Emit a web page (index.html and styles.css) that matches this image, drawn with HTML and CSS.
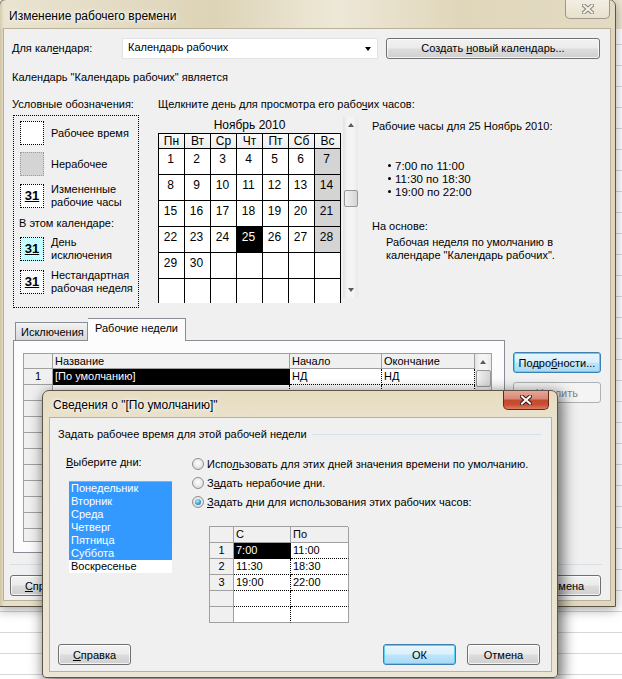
FILE: index.html
```html
<!DOCTYPE html>
<html lang="ru">
<head>
    <meta charset="UTF-8">
    <title>Изменение рабочего времени</title>
    <link rel="stylesheet" href="styles.css">
</head>
<body>

<div class="desktop">
    <div class="app-caption"></div>

    <!-- Main dialog -->
    <div class="window main-window">
        <div class="titlebar">
            <span class="title">Изменение рабочего времени</span>
            <span class="close-btn close-inactive">
                <svg width="12" height="10" viewBox="0 0 12 10"><path class="x-outline" d="M2 1.5 L10 8.5 M10 1.5 L2 8.5"/><path class="x-fill" d="M2 1.5 L10 8.5 M10 1.5 L2 8.5"/></svg>
            </span>
        </div>
        <div class="client main-client">
            <div class="calendar-row">
                <span class="cal-label">Для кал<u>е</u>ндаря:</span>
                <div class="combo">
                    <span>Календарь рабочих</span>
                    <span class="combo-arrow"></span>
                </div>
                <button class="btn new-cal-btn">Создать <u>н</u>овый календарь...</button>
            </div>
            <div class="cal-note">Календарь "Календарь рабочих" является</div>

            <div class="cal-body">
                <div class="legend-col">
                    <div class="col-head">Условные обозначения:</div>
                    <div class="legend-box">
                        <div class="legend-item">
                            <span class="swatch sw-work"></span>
                            <span>Рабочее время</span>
                        </div>
                        <div class="legend-item">
                            <span class="swatch sw-off"></span>
                            <span>Нерабочее</span>
                        </div>
                        <div class="legend-item">
                            <span class="swatch sw-changed">31</span>
                            <span>Измененные<br>рабочие часы</span>
                        </div>
                        <div class="legend-sub">В этом календаре:</div>
                        <div class="legend-item">
                            <span class="swatch sw-except">31</span>
                            <span>День<br>исключения</span>
                        </div>
                        <div class="legend-item">
                            <span class="swatch sw-week">31</span>
                            <span>Нестандартная<br>рабочая неделя</span>
                        </div>
                    </div>
                </div>

                <div class="month-col">
                    <div class="col-head">Щелкните день для просмотра его рабо<u>ч</u>их часов:</div>
                    <div class="month-wrap">
                        <div class="month">
                            <div class="month-title">Ноябрь 2010</div>
                            <div class="month-grid">
                                <span class="dh">Пн</span><span class="dh">Вт</span><span class="dh">Ср</span><span class="dh">Чт</span><span class="dh">Пт</span><span class="dh">Сб</span><span class="dh">Вс</span>
                                <span class="d">1</span><span class="d">2</span><span class="d">3</span><span class="d">4</span><span class="d">5</span><span class="d">6</span><span class="d off">7</span>
                                <span class="d">8</span><span class="d">9</span><span class="d">10</span><span class="d">11</span><span class="d">12</span><span class="d">13</span><span class="d off">14</span>
                                <span class="d">15</span><span class="d">16</span><span class="d">17</span><span class="d">18</span><span class="d">19</span><span class="d">20</span><span class="d off">21</span>
                                <span class="d">22</span><span class="d">23</span><span class="d">24</span><span class="d today">25</span><span class="d">26</span><span class="d">27</span><span class="d off">28</span>
                                <span class="d">29</span><span class="d">30</span><span class="d"></span><span class="d"></span><span class="d"></span><span class="d"></span><span class="d"></span>
                                <span class="d"></span><span class="d"></span><span class="d"></span><span class="d"></span><span class="d"></span><span class="d"></span><span class="d"></span>
                            </div>
                        </div>
                        <div class="vscroll cal-scroll">
                            <span class="arrow arrow-up"></span>
                            <span class="track"><span class="thumb"></span></span>
                            <span class="arrow arrow-down"></span>
                        </div>
                    </div>
                </div>

                <div class="hours-col">
                    <div class="hours-title">Рабочие часы для 25 Ноябрь 2010:</div>
                    <ul class="hours-list">
                        <li>7:00 по 11:00</li>
                        <li>11:30 по 18:30</li>
                        <li>19:00 по 22:00</li>
                    </ul>
                    <div class="based-title">На основе:</div>
                    <div class="based-text">Рабочая неделя по умолчанию в<br>календаре "Календарь рабочих".</div>
                </div>
            </div>

            <div class="tabs">
                <span class="tab">Исключения</span>
                <span class="tab tab-active">Рабочие недели</span>
            </div>
            <div class="tab-area">
                <div class="tab-panel">
                    <div class="week-grid">
                        <div class="wg-table">
                            <span class="wg-h"></span><span class="wg-h">Название</span><span class="wg-h">Начало</span><span class="wg-h">Окончание</span>
                            <span class="wg-n">1</span><span class="wg-c wg-sel">[По умолчанию]</span><span class="wg-c">НД</span><span class="wg-c">НД</span>
                            <span class="wg-n"></span><span class="wg-c"></span><span class="wg-c"></span><span class="wg-c"></span>
                            <span class="wg-n"></span><span class="wg-c"></span><span class="wg-c"></span><span class="wg-c"></span>
                            <span class="wg-n"></span><span class="wg-c"></span><span class="wg-c"></span><span class="wg-c"></span>
                            <span class="wg-n"></span><span class="wg-c"></span><span class="wg-c"></span><span class="wg-c"></span>
                            <span class="wg-n"></span><span class="wg-c"></span><span class="wg-c"></span><span class="wg-c"></span>
                            <span class="wg-n"></span><span class="wg-c"></span><span class="wg-c"></span><span class="wg-c"></span>
                            <span class="wg-n"></span><span class="wg-c"></span><span class="wg-c"></span><span class="wg-c"></span>
                            <span class="wg-n"></span><span class="wg-c"></span><span class="wg-c"></span><span class="wg-c"></span>
                            <span class="wg-n"></span><span class="wg-c"></span><span class="wg-c"></span><span class="wg-c"></span>
                            <span class="wg-n"></span><span class="wg-c"></span><span class="wg-c"></span><span class="wg-c"></span>
                        </div>
                        <div class="vscroll wg-scroll">
                            <span class="arrow arrow-up"></span>
                            <span class="track"><span class="thumb"></span></span>
                        </div>
                    </div>
                </div>
                <div class="side-buttons">
                    <button class="btn btn-hot">Подро<u>б</u>ности...</button>
                    <button class="btn btn-disabled">Уд<u>а</u>лить</button>
                </div>
            </div>
            <div class="separator"></div>
            <div class="dialog-buttons">
                <button class="btn"><u>С</u>правка</button>
                <span class="spacer"></span>
                <button class="btn">ОК</button>
                <button class="btn">Отмена</button>
            </div>
        </div>
    </div>

    <!-- Details dialog on top -->
    <div class="window details-window">
        <div class="titlebar">
            <span class="title">Сведения о "[По умолчанию]"</span>
            <span class="close-btn close-active">
                <svg width="12" height="10" viewBox="0 0 12 10"><path class="x-outline" d="M2 1.5 L10 8.5 M10 1.5 L2 8.5"/><path class="x-fill" d="M2 1.5 L10 8.5 M10 1.5 L2 8.5"/></svg>
            </span>
        </div>
        <div class="client details-client">
            <div class="group-head">
                <span>Задать рабочее время для этой рабочей недели</span>
                <span class="group-line"></span>
            </div>
            <div class="details-body">
                <div class="days-col">
                    <div class="days-label"><u>В</u>ыберите дни:</div>
                    <div class="days-list">
                        <div class="day sel">Понедельник</div>
                        <div class="day sel">Вторник</div>
                        <div class="day sel">Среда</div>
                        <div class="day sel">Четверг</div>
                        <div class="day sel">Пятница</div>
                        <div class="day sel focus">Суббота</div>
                        <div class="day">Воскресенье</div>
                    </div>
                </div>
                <div class="mode-col">
                    <div class="radio-row"><span class="radio"></span><span>Испо<u>л</u>ьзовать для этих дней значения времени по умолчанию.</span></div>
                    <div class="radio-row"><span class="radio"></span><span>З<u>а</u>дать нерабочие дни.</span></div>
                    <div class="radio-row"><span class="radio checked"></span><span><u>З</u>адать дни для использования этих рабочих часов:</span></div>
                    <div class="time-table">
                        <span class="tt-h"></span><span class="tt-h">С</span><span class="tt-h">По</span>
                        <span class="tt-n">1</span><span class="tt-c tt-sel">7:00</span><span class="tt-c">11:00</span>
                        <span class="tt-n">2</span><span class="tt-c">11:30</span><span class="tt-c">18:30</span>
                        <span class="tt-n">3</span><span class="tt-c">19:00</span><span class="tt-c">22:00</span>
                        <span class="tt-n"></span><span class="tt-c"></span><span class="tt-c"></span>
                        <span class="tt-n"></span><span class="tt-c"></span><span class="tt-c"></span>
                    </div>
                </div>
            </div>
            <div class="details-buttons">
                <button class="btn"><u>С</u>правка</button>
                <span class="spacer"></span>
                <button class="btn btn-hot">ОК</button>
                <button class="btn">Отмена</button>
            </div>
        </div>
    </div>
</div>

</body>
</html>
```

FILE: styles.css
```css
* {
    box-sizing: border-box;
}

body {
    margin: 0;
    font-family: "Liberation Sans", Arial, sans-serif;
    font-size: 11px;
    line-height: 14px;
    color: #000;
    background: #fff;
}

/* backdrop: Project window behind the dialogs */
.desktop {
    position: relative;
    width: 622px;
    height: 679px;
    overflow: hidden;
    background-color: #fff;
    background-image: repeating-linear-gradient(to bottom, #d6d6d6 0, #d6d6d6 1px, transparent 1px, transparent 21px);
    background-position: 0 2px;
}

.app-caption {
    height: 29px;
    background: linear-gradient(to right, #e9e2cb, #efe9d7 40%, #e2d8bd 70%, #ece6d3);
}

/* Aero style windows */
.window {
    position: absolute;
    display: flex;
    flex-direction: column;
    border: 1px solid #5b5647;
    border-radius: 7px 7px 0 0;
}

.main-window {
    left: -1px;
    top: -1px;
    width: 617px;
    height: 608px;
    padding: 0 5px 6px 4px;
    background: linear-gradient(to right, #cfc4a4 0, #e6dfc9 4px, #e9e3cf 50%, #dfd6bc 100%);
    box-shadow: 0 3px 12px rgba(0, 0, 0, 0.35);
}

.main-window .titlebar {
    background: linear-gradient(to right, rgba(255,255,255,0.15), rgba(201,185,140,0.35) 35%, rgba(255,255,255,0.2) 55%, rgba(214,200,160,0.3) 75%, rgba(255,255,255,0.1));
    margin: 0 -5px 0 -4px;
    padding: 0 5px 0 4px;
}

.details-window {
    left: 42px;
    top: 390px;
    width: 516px;
    height: 288px;
    padding: 0 6px 6px 7px;
    border-radius: 7px 7px 4px 4px;
    background: linear-gradient(to bottom, #e7dcc0 0, #e9e2cd 30px, #ebe5d3 100%);
    box-shadow: 3px 4px 14px 2px rgba(0, 0, 0, 0.55);
}

.titlebar {
    display: flex;
    align-items: flex-start;
    flex: none;
}

.main-window .titlebar {
    height: 29px;
}

.details-window .titlebar {
    height: 27px;
}

.title {
    font-size: 12px;
    line-height: 14px;
    text-shadow: 0 0 6px #fff, 0 0 3px #fff;
}

.main-window .title {
    padding: 9px 0 0 5px;
}

.details-window .title {
    padding: 7px 0 0 3px;
}

.close-btn {
    margin-left: auto;
    width: 46px;
    height: 19px;
    display: flex;
    align-items: center;
    justify-content: center;
    border-radius: 0 0 5px 5px;
}

.main-window .close-btn {
    width: 45px;
    margin-right: 0;
}

.details-window .close-btn {
    margin-right: 2px;
}

.close-inactive {
    border: 1px solid rgba(90, 85, 70, 0.55);
    border-top: none;
    background: linear-gradient(to bottom, rgba(255,255,255,0.55), rgba(240,235,220,0.4));
}

.close-active {
    border: 1px solid #6e2414;
    border-top: none;
    background: linear-gradient(to bottom, #e8a597 0, #d88774 45%, #c24a2f 50%, #c84f33 75%, #dc7e62 100%);
}

.x-outline {
    fill: none;
    stroke-width: 4.2;
    stroke-linecap: square;
}

.x-fill {
    fill: none;
    stroke-width: 2;
    stroke-linecap: square;
}

.close-inactive .x-outline {
    stroke: #8d897c;
}

.close-inactive .x-fill {
    stroke: #f4f1ea;
}

.close-active .x-outline {
    stroke: #3f1a12;
}

.close-active .x-fill {
    stroke: #fff;
}

.client {
    flex: 1;
    background: #f0f0f0;
    box-shadow: 0 0 0 1px #b9b19a;
}

/* ---------- main dialog ---------- */
.main-client {
    padding: 8px 9px 0 8px;
}

.calendar-row {
    display: flex;
    align-items: center;
    height: 22px;
}

.cal-label {
    width: 110px;
}

.combo {
    width: 256px;
    height: 21px;
    display: flex;
    align-items: center;
    padding: 0 0 2px 5px;
    background: #fff;
    border: 1px solid #e3e3e3;
}

.combo-arrow {
    margin-left: auto;
    margin-right: 6px;
    margin-top: 3px;
    border-left: 3.5px solid transparent;
    border-right: 3.5px solid transparent;
    border-top: 4px solid #000;
}

.btn {
    font-family: inherit;
    font-size: 11px;
    color: #000;
    height: 21px;
    width: 73px;
    padding: 0;
    border: 1px solid #707070;
    border-radius: 3px;
    background: linear-gradient(to bottom, #f2f2f2 0, #ebebeb 48%, #dddddd 52%, #cfcfcf 100%);
    box-shadow: inset 0 0 0 1px rgba(255, 255, 255, 0.75);
}

.btn-hot {
    border-color: #3c7fb1;
    background: linear-gradient(to bottom, #eaf6fd 0, #d9f0fc 48%, #bee6fd 52%, #a7d9f5 100%);
    box-shadow: inset 0 0 0 1px #5ed0f8;
}

.btn-disabled {
    border-color: #adb2b5;
    background: #f4f4f4;
    color: #838383;
    box-shadow: none;
}

.new-cal-btn {
    width: 214px;
    margin-left: 8px;
}

.cal-note {
    margin-top: 11px;
}

.cal-body {
    display: flex;
    margin-top: 13px;
}

.col-head {
    white-space: nowrap;
}

.legend-col {
    width: 146px;
    flex: none;
}

.legend-box {
    width: 126px;
    height: 193px;
    margin: 4px 0 0 1px;
    padding: 5px 0 0 6px;
    border: 1px dotted #000;
}

.legend-item {
    display: flex;
    align-items: center;
    line-height: 13px;
    margin-bottom: 7px;
}

.legend-item > span:last-child {
    margin-left: 7px;
}

.swatch {
    width: 24px;
    height: 24px;
    flex: none;
    border: 1px dotted #000;
    font-size: 13px;
    font-weight: bold;
    text-decoration: underline;
    text-align: center;
    line-height: 22px;
}

.sw-work,
.sw-changed {
    background: #fff;
}

.sw-off {
    background: #d4d4d4;
    border-color: #9a9a9a;
}

.sw-except {
    background: repeating-conic-gradient(#b4f5fa 0 25%, #fff 0 50%) 0 0 / 2px 2px;
}

.sw-week {
    background: repeating-conic-gradient(#fff9b8 0 25%, #fff 0 50%) 0 0 / 2px 2px;
}

.legend-sub {
    margin: 2px 0 6px -1px;
}

.month-col {
    width: 214px;
    flex: none;
}

.month-wrap {
    display: flex;
    margin-top: 6px;
}

.month {
    width: 183px;
}

.month-title {
    text-align: center;
    line-height: 16px;
    font-size: 12px;
}

.month-grid {
    display: grid;
    grid-template-columns: repeat(7, 26px);
    grid-template-rows: 15px repeat(6, 26px);
    height: 170px;
    overflow: hidden;
    border-top: 1px solid #000;
    border-left: 1px solid #000;
    width: 183px;
}

.dh,
.d {
    border-right: 1px solid #000;
    border-bottom: 1px solid #000;
    text-align: center;
    font-size: 12px;
}

.dh {
    background: linear-gradient(to bottom, #fafafa, #ececec);
    line-height: 14px;
}

.d {
    background: #fff;
    padding: 3px 2px 0 0;
    line-height: 14px;
}

.d.off {
    background: #d4d4d4;
}

.d.today {
    background: #000;
    color: #fff;
}

.vscroll {
    display: flex;
    flex-direction: column;
    background: linear-gradient(to right, #e3e3e3, #f4f4f4 30%, #f4f4f4 70%, #e8e8e8);
}

.cal-scroll {
    width: 15px;
    height: 181px;
    margin-left: 2px;
}

.arrow {
    height: 16px;
    flex: none;
    display: flex;
    align-items: center;
    justify-content: center;
}

.arrow::after {
    content: "";
    border-left: 3.5px solid transparent;
    border-right: 3.5px solid transparent;
}

.arrow-up::after {
    border-bottom: 4px solid #5a5a5a;
}

.arrow-down::after {
    border-top: 4px solid #5a5a5a;
}

.track {
    flex: 1;
    display: flex;
    flex-direction: column;
}

.thumb {
    height: 17px;
    margin: 0 0 0 1px;
    width: 14px;
    border: 1px solid #979797;
    border-radius: 2px;
    background: linear-gradient(to right, #f2f2f2, #e3e3e3 50%, #d5d5d5);
}

.cal-scroll .track {
    justify-content: flex-start;
    padding-top: 57px;
}

.hours-col {
    flex: none;
}

.hours-title {
    margin-top: 22px;
}

.hours-list {
    list-style: none;
    margin: 27px 0 0 0;
    padding: 0 0 0 16px;
    line-height: 13px;
    font-size: 11.5px;
}

.hours-list li::before {
    content: "";
    display: inline-block;
    width: 3px;
    height: 3px;
    border-radius: 50%;
    background: #000;
    margin: 0 4px 2px 0;
    vertical-align: middle;
}

.based-title {
    margin-top: 20px;
}

.based-text {
    margin: 3px 0 0 14px;
    line-height: 13px;
}

/* tabs */
.tabs {
    display: flex;
    align-items: flex-end;
    height: 22px;
    margin: 10px 0 0 3px;
}

.tab {
    height: 18px;
    padding: 2px 0 0 5px;
    width: 73px;
    border: 1px solid #898c95;
    border-bottom: none;
    background: linear-gradient(to bottom, #f3f3f3, #e5e5e5 50%, #d8d8d8);
}

.tab-active {
    width: 98px;
    height: 23px;
    margin-bottom: -1px;
    padding: 2px 0 0 7px;
    border-left: none;
    background: #fcfcfc;
    position: relative;
    z-index: 1;
}

.tab-area {
    display: flex;
}

.tab-panel {
    width: 493px;
    height: 213px;
    margin-left: 1px;
    padding: 12px 0 0 9px;
    border: 1px solid #898c95;
    background: #fcfcfc;
}

.week-grid {
    display: flex;
    width: 469px;
    height: 189px;
    overflow: hidden;
    border-left: 1px solid #a0a0a0;
    border-bottom: 1px solid #a0a0a0;
}

.wg-table {
    display: grid;
    grid-template-columns: 29px 237px 92px 93px;
    grid-auto-rows: 16px;
    align-content: start;
    background: #fff;
}

.wg-h,
.wg-n {
    background: #f0f0f0;
    border-right: 1px solid #a0a0a0;
    border-bottom: 1px solid #a0a0a0;
    line-height: 15px;
    padding-left: 2px;
}

.wg-h {
    border-top: 1px solid #a0a0a0;
}

.wg-n {
    text-align: center;
    padding-left: 0;
}

.wg-c {
    border-right: 1px dotted #000;
    border-bottom: 1px dotted #000;
    line-height: 15px;
    padding-left: 2px;
}

.wg-sel {
    background: #000;
    color: #fff;
}

.wg-scroll {
    width: 17px;
    border-top: 1px solid #a0a0a0;
    border-right: 1px solid #a0a0a0;
}

.wg-scroll .thumb {
    width: 15px;
    height: 17px;
}

.side-buttons {
    display: flex;
    flex-direction: column;
    gap: 9px;
    margin: 12px 0 0 8px;
}

.side-buttons .btn {
    width: 88px;
}

.separator {
    height: 1px;
    margin: 11px -1px 0 -2px;
    background: #d5dfe5;
}

.dialog-buttons {
    display: flex;
    gap: 8px;
    margin: 10px 0 0 -2px;
}

.spacer {
    flex: 1;
}

/* ---------- details dialog ---------- */
.details-client {
    display: flex;
    flex-direction: column;
}

.group-head {
    display: flex;
    align-items: center;
    margin-top: 9px;
    padding: 0 10px 0 8px;
}

.group-line {
    flex: 1;
    height: 1px;
    margin-left: 5px;
    background: #d5dfe5;
}

.details-body {
    display: flex;
    margin-top: 13px;
}

.days-col {
    width: 142px;
    flex: none;
    padding-left: 16px;
}

.days-label {
    margin-top: 1px;
}

.days-list {
    width: 103px;
    height: 92px;
    margin: 12px 0 0 3px;
    border-top: 1px solid #a9a9a9;
    background: #fff;
}

.day {
    height: 13px;
    line-height: 13px;
    padding-left: 2px;
}

.day.sel {
    background: #3399ff;
    color: #fff;
}

.day.focus {
    outline: 1px dotted #c97a3a;
    outline-offset: -1px;
}

.radio-row {
    display: flex;
    align-items: center;
    height: 19px;
}

.radio {
    width: 12px;
    height: 12px;
    margin-right: 3px;
    border-radius: 50%;
    border: 1px solid #8e8f8f;
    background: radial-gradient(circle at 50% 40%, #ffffff 0, #ececec 45%, #cfcfcf 100%);
    display: flex;
    align-items: center;
    justify-content: center;
}

.radio.checked::after {
    content: "";
    width: 6px;
    height: 6px;
    border-radius: 50%;
    background: radial-gradient(circle at 40% 35%, #bdeeff 0, #3b9ad9 55%, #185c96 100%);
}

.time-table {
    display: grid;
    grid-template-columns: 24px 57px 58px;
    grid-template-rows: repeat(6, 16px);
    width: 139px;
    margin: 15px 0 0 17px;
    border-left: 1px solid #a0a0a0;
    border-top: 1px solid #a0a0a0;
    background: #fff;
}

.tt-h,
.tt-n {
    background: #f0f0f0;
    border-right: 1px solid #a0a0a0;
    border-bottom: 1px solid #a0a0a0;
    line-height: 15px;
    padding-left: 2px;
}

.tt-n {
    text-align: center;
    padding-left: 0;
}

.tt-c {
    border-right: 1px dotted #000;
    border-bottom: 1px dotted #000;
    line-height: 15px;
    padding-left: 2px;
}

.tt-c:nth-child(3n) {
    border-right: 1px solid #a0a0a0;
}

.tt-n:nth-last-child(-n+6),
.tt-c:nth-last-child(-n+2) {
    border-bottom-color: #a0a0a0;
    border-bottom-style: solid;
}

.tt-c:nth-last-child(-n+6):not(:nth-last-child(-n+2)) {
    border-bottom-style: dotted;
}

.tt-sel {
    background: #000;
    color: #fff;
}

.details-buttons {
    display: flex;
    gap: 11px;
    margin-top: 21px;
    padding: 0 11px 0 8px;
}
```
